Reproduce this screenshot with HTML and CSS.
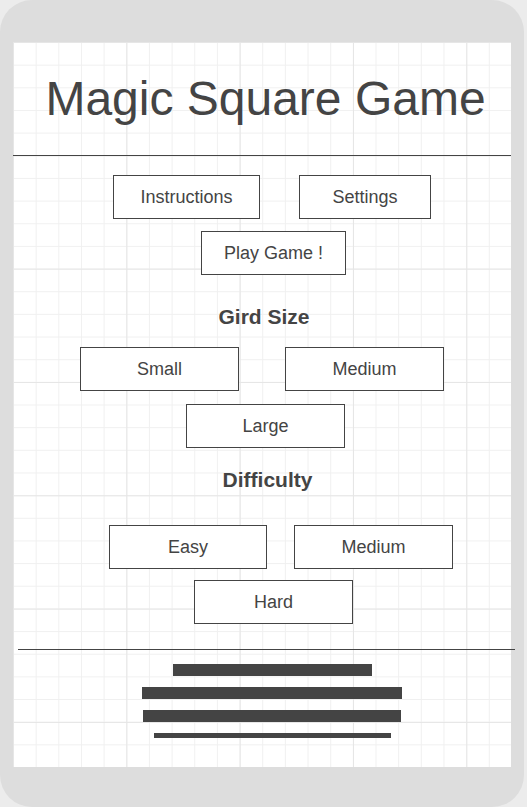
FILE: index.html
```html
<!DOCTYPE html>
<html lang="en">
<head>
<meta charset="utf-8">
<title>Magic Square Game</title>
<link rel="stylesheet" href="styles.css">
</head>
<body>
<div class="frame">
  <div class="canvas">
    <h1 class="title">Magic Square Game</h1>
    <div class="divider"></div>

    <div class="row row-menu">
      <div class="btn btn-instr">Instructions</div>
      <div class="btn btn-settings">Settings</div>
    </div>
    <div class="row row-play">
      <div class="btn btn-play">Play Game !</div>
    </div>

    <h2 class="heading heading-grid">Gird Size</h2>
    <div class="row row-size">
      <div class="btn btn-wide">Small</div>
      <div class="btn btn-wide">Medium</div>
    </div>
    <div class="row row-large">
      <div class="btn btn-wide">Large</div>
    </div>

    <h2 class="heading heading-diff">Difficulty</h2>
    <div class="row row-diff">
      <div class="btn btn-easy">Easy</div>
      <div class="btn btn-wide">Medium</div>
    </div>
    <div class="row row-hard">
      <div class="btn btn-wide">Hard</div>
    </div>

    <div class="divider divider-foot"></div>
    <div class="footer">
      <div class="bar bar-1"></div>
      <div class="bar bar-2"></div>
      <div class="bar bar-3"></div>
      <div class="bar bar-4"></div>
    </div>
  </div>
</div>
</body>
</html>
```

FILE: styles.css
```css
html, body {
  margin: 0;
  padding: 0;
}
body {
  background: #ececec;
  font-family: "Liberation Sans", Arial, sans-serif;
  color: #444444;
  width: 527px;
  height: 807px;
  overflow: hidden;
}
.frame {
  box-sizing: border-box;
  width: 524px;
  height: 807px;
  background: #dddddd;
  border-radius: 32px;
  padding: 42px 13px 40px 13px;
}
.canvas {
  height: 725px;
  display: flex;
  flex-direction: column;
  background-color: #ffffff;
  background-image:
    linear-gradient(to right, #e6e6e6 1px, transparent 1px),
    linear-gradient(to bottom, #e6e6e6 1px, transparent 1px),
    linear-gradient(to right, #f0f0f0 1px, transparent 1px),
    linear-gradient(to bottom, #f0f0f0 1px, transparent 1px);
  background-size: 113.333px 113.333px, 113.333px 113.333px, 22.667px 22.667px, 22.667px 22.667px;
}
.title {
  margin: 29px 0 0 0;
  padding-left: 7px;
  font-size: 48px;
  line-height: 55px;
  font-weight: normal;
  text-align: center;
  color: #444444;
}
.divider {
  height: 1px;
  background: #444444;
  margin-top: 29px;
}
.row {
  display: flex;
  height: 44px;
}
.btn {
  box-sizing: border-box;
  height: 44px;
  border: 1px solid #444444;
  background: #ffffff;
  font-size: 18px;
  display: flex;
  align-items: center;
  justify-content: center;
}
.row-menu { margin-top: 19px; padding-left: 100px; gap: 39px; }
.btn-instr { width: 147px; }
.btn-settings { width: 132px; }
.row-play { margin-top: 12px; padding-left: 188px; }
.btn-play { width: 145px; }
.btn-wide { width: 159px; }
.btn-easy { width: 158px; }

.heading {
  margin: 0;
  font-size: 21px;
  line-height: 24px;
  font-weight: bold;
  text-align: center;
}
.heading-grid { margin-top: 30px; padding-left: 4px; }
.row-size { margin-top: 18px; padding-left: 67px; gap: 46px; }
.row-large { margin-top: 13px; padding-left: 173px; }
.heading-diff { margin-top: 20px; padding-left: 11px; }
.row-diff { margin-top: 33px; padding-left: 96px; gap: 27px; }
.row-hard { margin-top: 11px; padding-left: 181px; }

.divider-foot {
  margin-top: 25px;
  margin-left: 5px;
  margin-right: -4px;
}
.footer {
  margin-top: 14px;
  padding-left: 20px;
  display: flex;
  flex-direction: column;
  align-items: center;
  gap: 11px;
}
.bar {
  background: #444444;
  height: 12px;
}
.bar-1 { width: 199px; }
.bar-2 { width: 260px; }
.bar-3 { width: 258px; }
.bar-4 { width: 237px; height: 5px; }
```
